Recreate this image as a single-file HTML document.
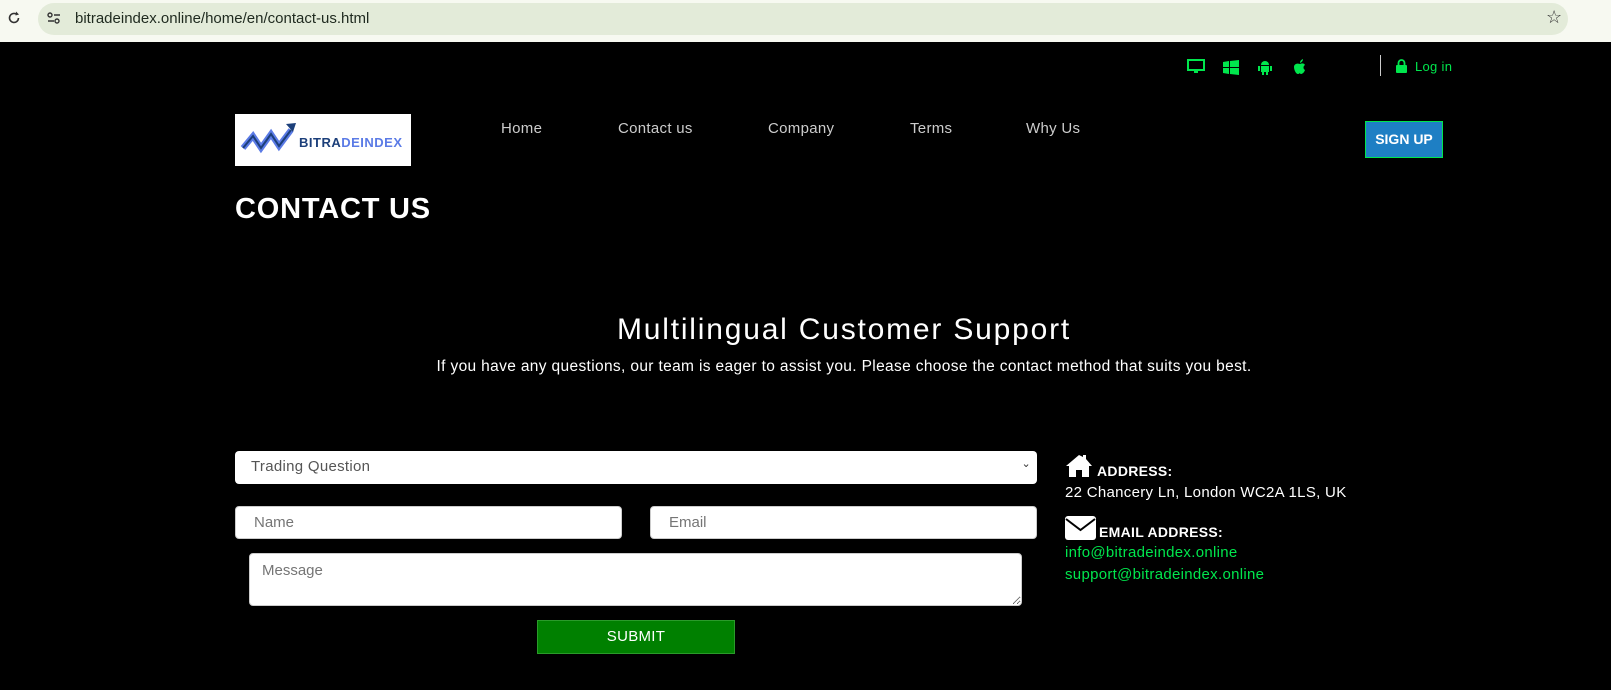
<!DOCTYPE html>
<html><head><meta charset="utf-8"><style>
*{margin:0;padding:0;box-sizing:border-box}
body{width:1611px;height:690px;background:#000;font-family:"Liberation Sans",sans-serif;overflow:hidden;position:relative;color:#fff;letter-spacing:0.3px}
.bar{position:absolute;left:0;top:0;width:1611px;height:42px;background:#f7f9f1;letter-spacing:0}
.pill{position:absolute;left:38px;top:3px;width:1530px;height:32px;background:#e3ebd9;border-radius:16px}
.url{position:absolute;left:75px;top:10px;font-size:15px;color:#1f2a1f}
.abs{position:absolute}
.nav{font-size:15px;color:#ccc;top:120px}
input,select,textarea{position:absolute;background:#fff;border:1px solid #ccc;border-radius:4px;font-family:"Liberation Sans",sans-serif;font-size:15px;color:#888;padding-left:18px}
.g{color:#00e64d}
</style></head><body>
<div class="bar"><div class="pill"></div>
<svg class="abs" style="left:7px;top:11px" width="14" height="14" viewBox="0 0 14 14"><path d="M11.5 7A4.5 4.5 0 1 1 9.5 3.2" stroke="#333" stroke-width="1.6" fill="none"/><path d="M9 0.5L12 3.5 8.5 4.5z" fill="#333"/></svg>
<svg class="abs" style="left:47px;top:12px" width="14" height="12" viewBox="0 0 14 12"><circle cx="3" cy="3" r="2" stroke="#333" fill="none" stroke-width="1.4"/><path d="M7 3h6M1 9h6" stroke="#333" stroke-width="1.4"/><circle cx="10" cy="9" r="2" stroke="#333" fill="none" stroke-width="1.4"/></svg>
<div class="url">bitradeindex.online/home/en/contact-us.html</div>
<div class="abs" style="left:1546px;top:7px;font-size:18px;color:#333">☆</div>
</div>
<svg class="abs" style="left:1187px;top:59px" width="18" height="15" viewBox="0 0 18 15"><rect x="1" y="1" width="16" height="10" fill="none" stroke="#00e64d" stroke-width="2"/><rect x="7" y="12" width="4" height="2" fill="#00e64d"/></svg>
<svg class="abs" style="left:1223px;top:60px" width="16" height="15" viewBox="0 0 16 15"><path d="M0 2l6-1v6H0zM7 1l9-1v7H7zM0 8h6v6l-6-1zM7 8h9v7l-9-1z" fill="#00e64d"/></svg>
<svg class="abs" style="left:1258px;top:59px" width="14" height="16" viewBox="0 0 14 16"><path d="M3 6a4 4 0 0 1 8 0z" fill="#00e64d"/><rect x="3" y="7" width="8" height="6" fill="#00e64d"/><rect x="0" y="7" width="2" height="5" fill="#00e64d"/><rect x="12" y="7" width="2" height="5" fill="#00e64d"/><rect x="4" y="12" width="2" height="4" fill="#00e64d"/><rect x="8" y="12" width="2" height="4" fill="#00e64d"/></svg>
<svg class="abs" style="left:1293px;top:59px" width="14" height="16" viewBox="0 0 14 16"><path d="M7 5c2-1 4-1 5 1-2 1-2 4 0 5-1 3-3 4-4 4s-1-1-1-1-1 1-2 1c-2 0-4-4-4-7s3-4 6-3z M7 4c0-2 1-3 3-4 0 2-1 3-3 4z" fill="#00e64d"/></svg>
<div class="abs" style="left:1380px;top:55px;width:1px;height:21px;background:#ccc"></div>
<svg class="abs" style="left:1396px;top:59px" width="11" height="14" viewBox="0 0 11 14"><path d="M2.5 6V4a3 3 0 0 1 6 0v2" stroke="#00e64d" stroke-width="1.8" fill="none"/><rect x="0" y="6" width="11" height="8" rx="1" fill="#00e64d"/></svg>
<div class="abs g" style="left:1415px;top:59px;font-size:13px">Log in</div>
<div class="abs" style="left:235px;top:114px;width:176px;height:52px;background:#fff">
<svg class="abs" style="left:5px;top:8px" width="58" height="36" viewBox="0 0 58 36"><path d="M3 26l10-12 8 12 10-14 8 12 12-16" stroke="#5b7be6" stroke-width="6" fill="none"/><path d="M3 26l10-12 8 12 10-14 8 12 12-16" stroke="#1c3f7a" stroke-width="2" fill="none"/><path d="M46 2l10-1-3 9z" fill="#1c3f7a"/></svg>
<div class="abs" style="left:64px;top:21px;font-weight:bold;font-size:13px;letter-spacing:0.5px;color:#1c3f7a">BITRA<span style="color:#5b7be6">DEINDEX</span></div>
</div>
<div class="abs nav" style="left:501px">Home</div>
<div class="abs nav" style="left:618px">Contact us</div>
<div class="abs nav" style="left:768px">Company</div>
<div class="abs nav" style="left:910px">Terms</div>
<div class="abs nav" style="left:1026px">Why Us</div>
<div class="abs" style="left:1365px;top:121px;width:78px;height:37px;background:#1e7fc4;border:1px solid #00e64d;font-weight:bold;font-size:14px;text-align:center;line-height:35px;letter-spacing:0">SIGN UP</div>
<div class="abs" style="left:235px;top:193px;font-size:29px;font-weight:bold;letter-spacing:0.8px">CONTACT US</div>
<div class="abs" style="left:0;width:1688px;top:313px;text-align:center;font-size:30px;letter-spacing:1.8px">Multilingual Customer Support</div>
<div class="abs" style="left:0;width:1688px;top:358px;text-align:center;font-size:15.5px;letter-spacing:0.35px">If you have any questions, our team is eager to assist you. Please choose the contact method that suits you best.</div>
<div class="abs" style="left:235px;top:451px;width:802px;height:33px;background:#fff;border-radius:4px;color:#555;font-size:15px;padding:7px 16px">Trading Question<span style="position:absolute;right:6px;top:6px;font-size:11px;color:#333">⌄</span></div>
<input style="left:235px;top:506px;width:387px;height:33px" placeholder="Name">
<input style="left:650px;top:506px;width:387px;height:33px" placeholder="Email">
<textarea style="left:249px;top:553px;width:773px;height:53px;padding:8px 12px" placeholder="Message"></textarea>
<div class="abs" style="left:537px;top:620px;width:198px;height:34px;background:#008000;border:1px solid #2a9a2a;text-align:center;line-height:32px;font-size:15px">SUBMIT</div>
<svg class="abs" style="left:1065px;top:454px" width="28" height="24" viewBox="0 0 28 24"><path d="M14 1L1 12h3v11h7v-7h6v7h7V12h3L21 5V1h-3v2z" fill="#fff"/></svg>
<div class="abs" style="left:1097px;top:463px;font-size:14px;font-weight:bold">ADDRESS:</div>
<div class="abs" style="left:1065px;top:484px;font-size:15px">22 Chancery Ln, London WC2A 1LS, UK</div>
<svg class="abs" style="left:1065px;top:516px" width="31" height="24" viewBox="0 0 31 24"><rect x="0" y="0" width="31" height="24" rx="3" fill="#fff"/><path d="M1 3l14.5 11L30 3" stroke="#000" stroke-width="2" fill="none"/></svg>
<div class="abs" style="left:1099px;top:524px;font-size:14px;font-weight:bold">EMAIL ADDRESS:</div>
<div class="abs g" style="left:1065px;top:544px;font-size:15px">info@bitradeindex.online</div>
<div class="abs g" style="left:1065px;top:566px;font-size:15px">support@bitradeindex.online</div>
</body></html>
